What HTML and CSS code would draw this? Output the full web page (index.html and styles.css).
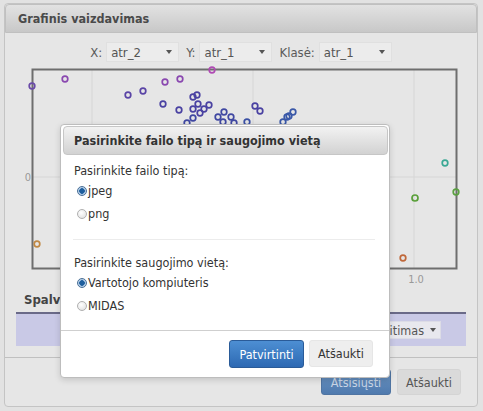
FILE: index.html
```html
<!DOCTYPE html>
<html lang="lt">
<head>
<meta charset="utf-8">
<title>Grafinis vaizdavimas</title>
<link rel="stylesheet" href="styles.css">
</head>
<body>
<div class="panel">
  <div class="panel-head">Grafinis vaizdavimas</div>
  <div class="controls">
    <span class="ctl-label">X:</span><span class="sel">atr_2<span class="caret"></span></span>
    <span class="ctl-label">Y:</span><span class="sel">atr_1<span class="caret"></span></span>
    <span class="ctl-label">Klasė:</span><span class="sel">atr_1<span class="caret"></span></span>
  </div>
  <svg class="plot" width="472" height="224" viewBox="0 0 472 224">
    <g transform="translate(-5,-64)">
      <line x1="92" y1="70" x2="92" y2="268" class="grid"/>
      <line x1="253" y1="70" x2="253" y2="268" class="grid"/>
      <line x1="414" y1="70" x2="414" y2="268" class="grid"/>
      <line x1="33" y1="177" x2="456" y2="177" class="grid"/>
      <rect x="32.5" y="69.5" width="424" height="199" class="frame"/>
      <text x="28" y="181" class="axis" text-anchor="middle">0</text>
      <text x="416" y="283" class="axis" text-anchor="middle">1.0</text>
      <g class="pts">
        <circle cx="32" cy="86" r="2.8" stroke="#6a4aa8"/>
        <circle cx="65" cy="79" r="2.8" stroke="#8a48b0"/>
        <circle cx="212" cy="70" r="2.8" stroke="#b04ab4"/>
        <circle cx="165" cy="82" r="2.8" stroke="#8a48b0"/>
        <circle cx="180" cy="79" r="2.8" stroke="#8a48b0"/>
        <circle cx="128" cy="95" r="2.8" stroke="#5a44a6"/>
        <circle cx="143" cy="91" r="2.8" stroke="#5a44a6"/>
        <circle cx="163" cy="104" r="2.8" stroke="#4a42a2"/>
        <circle cx="179" cy="110" r="2.8" stroke="#4a42a2"/>
        <circle cx="193" cy="97" r="2.8" stroke="#4a42a2"/>
        <circle cx="197" cy="95" r="2.8" stroke="#4a42a2"/>
        <circle cx="198" cy="104" r="2.8" stroke="#4a42a2"/>
        <circle cx="193" cy="109" r="2.8" stroke="#4a42a2"/>
        <circle cx="200" cy="113" r="2.8" stroke="#4a42a2"/>
        <circle cx="204" cy="109" r="2.8" stroke="#4a42a2"/>
        <circle cx="209" cy="105" r="2.8" stroke="#4a42a2"/>
        <circle cx="193" cy="118" r="2.8" stroke="#4048a2"/>
        <circle cx="187" cy="123" r="2.8" stroke="#4048a2"/>
        <circle cx="218" cy="117" r="2.8" stroke="#4048a2"/>
        <circle cx="224" cy="112" r="2.8" stroke="#4048a2"/>
        <circle cx="231" cy="117" r="2.8" stroke="#4048a2"/>
        <circle cx="223" cy="122" r="2.8" stroke="#4048a2"/>
        <circle cx="234" cy="123" r="2.8" stroke="#4048a2"/>
        <circle cx="247" cy="122" r="2.8" stroke="#3a50a4"/>
        <circle cx="255" cy="106" r="2.8" stroke="#4a42a2"/>
        <circle cx="260" cy="111" r="2.8" stroke="#4a42a2"/>
        <circle cx="283" cy="122" r="2.8" stroke="#3a58a8"/>
        <circle cx="287" cy="117" r="2.8" stroke="#3a58a8"/>
        <circle cx="289" cy="116" r="2.8" stroke="#3a58a8"/>
        <circle cx="293" cy="112" r="2.8" stroke="#3a58a8"/>
        <circle cx="445" cy="163" r="2.8" stroke="#3aa894"/>
        <circle cx="415" cy="198" r="3" stroke="#5aa03a" stroke-width="2.2"/>
        <circle cx="456" cy="192" r="2.8" stroke="#5aa040"/>
        <circle cx="403" cy="258" r="2.8" stroke="#c0683a"/>
        <circle cx="37" cy="244" r="2.8" stroke="#c08844"/>
      </g>
    </g>
  </svg>
  <div class="section-label"><span class="section-text">Spalvinimas</span></div>
  <div class="color-band">
    <span class="sel sel-band"><span class="band-text">Kitimas</span><span class="caret"></span></span>
  </div>
  <div class="panel-foot">
    <button class="btn btn-primary btn-dim">Atsisiųsti</button>
    <button class="btn btn-default btn-dim-default">Atšaukti</button>
  </div>
</div>

<div class="modal">
  <div class="modal-head">Pasirinkite failo tipą ir saugojimo vietą</div>
  <div class="modal-body">
    <div class="q-label">Pasirinkite failo tipą:</div>
    <label class="radio-row"><span class="radio checked"></span>jpeg</label>
    <label class="radio-row"><span class="radio"></span>png</label>
    <div class="divider"></div>
    <div class="q-label q-label-2">Pasirinkite saugojimo vietą:</div>
    <label class="radio-row"><span class="radio checked"></span>Vartotojo kompiuteris</label>
    <label class="radio-row"><span class="radio"></span>MIDAS</label>
  </div>
  <div class="modal-foot">
    <button class="btn btn-primary">Patvirtinti</button>
    <button class="btn btn-default">Atšaukti</button>
  </div>
</div>
</body>
</html>
```

FILE: styles.css
```css
* { box-sizing: border-box; }

html, body {
  margin: 0;
  padding: 0;
}

body {
  width: 483px;
  height: 411px;
  background: #e2e2e2;
  font-family: "DejaVu Sans Condensed", "DejaVu Sans", sans-serif;
  font-size: 12.5px;
  color: #333;
  position: relative;
  overflow: hidden;
  padding: 3px 5px 4px 4px;
}

.panel {
  height: 404px;
  border: 1px solid #c4c4c4;
  border-radius: 4px;
  background: #e6e6e6;
  display: flex;
  flex-direction: column;
}

.panel-head {
  height: 29px;
  border: 1px solid #c0c0c0;
  border-radius: 4px 4px 0 0;
  background: linear-gradient(#e2e2e2, #c8c8c8);
  padding-left: 12px;
  font-weight: bold;
  font-size: 12.5px;
  line-height: 27px;
  color: #4a4a4a;
}

.controls {
  margin-top: 9px;
  height: 20px;
  display: flex;
  justify-content: center;
  align-items: center;
  color: #5a5a5a;
  font-size: 13px;
}

.ctl-label { margin: 0 4px 0 7px; }
.ctl-label:first-child { margin-left: 0; }

.sel {
  display: inline-flex;
  align-items: center;
  justify-content: space-between;
  width: 73px;
  height: 20px;
  padding: 0 6px 0 4px;
  background: #ececec;
  border: 1px solid #e0e0e0;
  color: #555;
  font-size: 13px;
}

.caret {
  width: 0;
  height: 0;
  border-left: 3px solid transparent;
  border-right: 3px solid transparent;
  border-top: 4px solid #555;
}

.plot {
  display: block;
  margin-top: 2px;
  overflow: visible;
}

.grid { stroke: #d6d6d6; stroke-width: 1; }
.frame { fill: none; stroke: #6e6e6e; stroke-width: 2; }
.axis { font-family: "DejaVu Sans Condensed", "DejaVu Sans", sans-serif; font-size: 11px; fill: #999; }
.pts circle { fill: none; stroke-width: 1.7; }

.section-label {
  margin-top: 4px;
  padding-left: 19px;
  width: 55px;
  height: 20px;
  line-height: 16px;
  font-weight: bold;
  font-size: 13px;
  color: #444;
  overflow: hidden;
  white-space: nowrap;
}

.color-band {
  margin: 0 11px 0 11px;
  height: 34px;
  border-top: 2px solid #6a6a88;
  background: #c9c9e6;
  display: flex;
  justify-content: flex-end;
  align-items: center;
  padding-right: 25px;
}

.sel-band {
  width: 64px;
  height: 18px;
  background: #e8e8ee;
  border-color: #dcdce6;
  font-size: 12.5px;
  justify-content: flex-end;
  padding-right: 4px;
}

.band-text { margin-right: 6px; }

.panel-foot {
  margin-top: 11px;
  border-top: 1px solid #c0c0c0;
  padding: 11px 16px 0 0;
  display: flex;
  justify-content: flex-end;
  gap: 6px;
}

.btn {
  font-family: "DejaVu Sans Condensed", "DejaVu Sans", sans-serif;
  font-size: 12.5px;
  height: 27px;
  border-radius: 3px;
  padding: 0;
  cursor: default;
}

.btn-primary {
  width: 75px;
  height: 28px;
  color: #fff;
  background: linear-gradient(#4d8fd3, #2d69b3);
  border: 1px solid #2a5b98;
}

.btn-default {
  width: 64px;
  color: #333;
  background: #eeeeee;
  border: 1px solid #e6e6e6;
}

.btn-dim {
  width: 70px;
  height: 26px;
  color: #c9d6e6;
  background: linear-gradient(#6b94c2, #4f7aae);
  border-color: #4f74a2;
}

.btn-dim-default {
  height: 26px;
  color: #555;
  background: #dadada;
  border-color: #d4d4d4;
}

/* Modal dialog overlaying the panel */
.modal {
  position: absolute;
  left: 60px;
  top: 124px;
  width: 330px;
  height: 254px;
  background: #fff;
  border: 1px solid #bdbdbd;
  border-radius: 4px;
  box-shadow: 0 2px 6px rgba(0, 0, 0, 0.15);
  display: flex;
  flex-direction: column;
}

.modal-head {
  margin: 1px 1px 0 2px;
  height: 29px;
  border: 1px solid #c6c6c6;
  border-radius: 4px;
  background: linear-gradient(#f2f2f2, #d2d2d2);
  padding-left: 10px;
  font-weight: bold;
  font-size: 12.5px;
  line-height: 27px;
  color: #333;
}

.modal-body {
  padding: 8px 12px 0 12px;
  height: 175px;
}

.q-label {
  height: 16px;
  line-height: 16px;
  padding-left: 1px;
}

.q-label-2 { margin-top: 15px; }

.radio-row {
  display: flex;
  align-items: center;
  height: 23px;
  padding-left: 4px;
}

.radio {
  width: 10px;
  height: 10px;
  border-radius: 50%;
  border: 1px solid #b0b0b0;
  background: radial-gradient(circle at 40% 35%, #ffffff, #dcdcdc);
  margin-right: 1px;
}

.radio.checked {
  border-color: #4a6f96;
  background: radial-gradient(circle, #1f5f9e 0 2.5px, #a9c6e4 3px, #d6e6f4 100%);
}

.divider {
  margin-top: 14px;
  height: 1px;
  background: #ececec;
  margin-right: 2px;
}

.modal-foot {
  border-top: 1px solid #cfcfcf;
  flex: 1;
  display: flex;
  justify-content: flex-end;
  align-items: flex-start;
  padding: 9px 16px 0 0;
  gap: 5px;
}
```
